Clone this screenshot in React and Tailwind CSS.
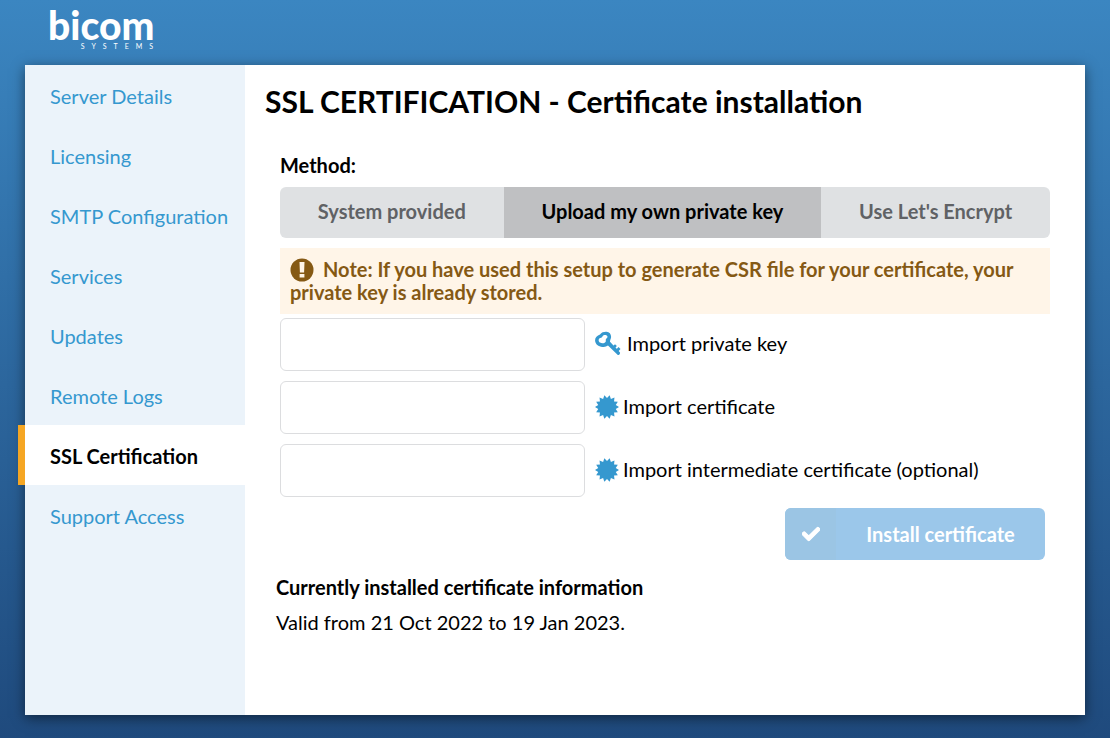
import { useState } from "react";
import { FaCheck } from "react-icons/fa";

const menuItems = [
  "Server Details",
  "Licensing",
  "SMTP Configuration",
  "Services",
  "Updates",
  "Remote Logs",
  "SSL Certification",
  "Support Access",
];

const methods = ["System provided", "Upload my own private key", "Use Let's Encrypt"];

// 14 spikes around the centre of a 24x24 box
const sealPoints = Array.from({ length: 28 }, (_, i) => {
  const radius = i % 2 ? 12 : 9;
  const angle = (Math.PI * i) / 14;
  return `${(12 + radius * Math.sin(angle)).toFixed(2)},${(12 - radius * Math.cos(angle)).toFixed(2)}`;
}).join(" ");

const KeyIcon = () => (
  <svg viewBox="0 0 28 26" className="h-[26px] w-7 shrink-0 text-[#3598cf]" fill="currentColor" aria-hidden="true">
    <path
      fillRule="evenodd"
      d="M5 3.500C6.500 1.200 9 .7 11.500.8c3 .2 4.700 2.600 4.600 5.200-.1 1.800-1.200 3.200-1.100 4.700L25 21.600c.3 1.400-.8 2.600-2.200 2.500l-9.800-9.500c-1.700 1.200-3.200 1.500-5.500 1.300C3.300 15.600.4 13.100.1 9.700-.1 6.700 2 4.500 5 3.500ZM7.600 5.300C7 6.900 5.400 6.700 4.300 7.600 3.200 8.600 3.600 10.700 5 11.600c1.700 1.100 4.400.9 5.500-.5.700-1-.1-2.100.5-3.200.6-.9 1.500-1 1.500-2.200C12.300 3.600 8.500 3.300 7.600 5.300Z"
    />
    <path d="M17.500 15.500 20 13.200l1.900 1.900-1.500 1.500 1.300 1.400 1.800-1.900 2 2-3.300 3.300Z" />
  </svg>
);

const SealIcon = () => (
  <svg viewBox="0 0 24 24" className="h-6 w-6 shrink-0 text-[#3598cf]" fill="currentColor" aria-hidden="true">
    <polygon points={sealPoints} />
  </svg>
);

const AlertIcon = () => (
  <svg viewBox="0 0 24 24" className="-my-1 mr-[9px] inline-block h-6 w-6 align-[-1px]" aria-hidden="true">
    <circle cx="12" cy="12" r="11.500" fill="#855914" />
    <path d="M9.500 4h5l-.4 10.500H9.900ZM9.600 16h4.800v3.500H9.600Z" fill="#fff5e8" />
  </svg>
);

const fields = [
  { id: "privateKey", label: "Import private key", icon: KeyIcon },
  { id: "certificate", label: "Import certificate", icon: SealIcon },
  { id: "intermediate", label: "Import intermediate certificate (optional)", icon: SealIcon },
];

const App = () => {
  const [active, setActive] = useState("SSL Certification");
  const [method, setMethod] = useState(methods[1]);
  const [values, setValues] = useState({ privateKey: "", certificate: "", intermediate: "" });

  const handleChange = (e) => {
    const { name, value } = e.target;
    setValues((prev) => ({ ...prev, [name]: value }));
  };

  return (
    <div className="flex min-h-screen flex-col bg-linear-to-b from-[#3b86c1] to-[#1f4a7d] px-[25px] pb-[23px] font-['Lato',sans-serif] text-xl text-black">
      <header className="h-[65px] pt-[7px] pl-[23px] text-white">
        <a href="#home" className="flex w-28 flex-col">
          <span className="text-[39px] leading-9 font-black">bicom</span>
          <span className="self-end text-[7px] leading-[6px] tracking-[7px]">SYSTEMS</span>
        </a>
      </header>

      <div className="flex flex-1 bg-white shadow-[0_3px_12px_rgba(0,0,0,0.5)]">
        <nav className="w-[220px] shrink-0 bg-[#ebf3fa]">
          {menuItems.map((item) => (
            <a
              key={item}
              href="#menu"
              onClick={() => setActive(item)}
              className={
                item === active
                  ? "-ml-[7px] flex h-15 items-center border-l-[7px] border-[#f5a623] bg-white pt-0.5 pl-[25px] font-bold"
                  : "flex h-15 items-center pt-0.5 pl-[25px] text-[#3598cf]"
              }
            >
              {item}
            </a>
          ))}
        </nav>

        <main className="min-w-0 flex-1 px-5 pt-[18px]">
          <h1 className="text-3xl leading-9 font-bold">SSL CERTIFICATION - Certificate installation</h1>

          <form className="px-[15px] pt-8" onSubmit={(e) => e.preventDefault()}>
            <p className="pb-2 leading-7 font-bold">Method:</p>
            <div className="flex h-[51px] overflow-hidden rounded-md bg-[#dfe1e3]">
              {methods.map((name) => (
                <button
                  key={name}
                  type="button"
                  onClick={() => setMethod(name)}
                  className={
                    name === method
                      ? "flex-auto bg-[#bfc0c2] pb-1 font-bold whitespace-nowrap"
                      : "flex-auto pb-1 font-bold whitespace-nowrap text-[#606265]"
                  }
                >
                  {name}
                </button>
              ))}
            </div>

            <p className="mt-[10px] bg-[#fff5e8] p-[10px] leading-[23px] font-bold text-[#855914]">
              <AlertIcon />
              Note: If you have used this setup to generate CSR file for your certificate, your private key is
              already stored.
            </p>

            <div className="mt-1 flex flex-col gap-[10px]">
              {fields.map(({ id, label, icon: Icon }) => (
                <div key={id} className="flex items-center gap-[10px]">
                  <input
                    id={id}
                    name={id}
                    type="text"
                    value={values[id]}
                    onChange={handleChange}
                    className="h-[53px] w-[305px] rounded-md border border-[#dcdddf] bg-white px-3 outline-none focus:border-[#3598cf]"
                  />
                  <label htmlFor={id} className="flex items-center gap-1 pb-0.5">
                    <Icon />
                    <span className="pb-0.5">{label}</span>
                  </label>
                </div>
              ))}
            </div>

            <div className="flex justify-end pt-[11px] pr-[5px]">
              <button
                type="submit"
                className="flex h-[52px] w-[260px] overflow-hidden rounded-md bg-[#9bc7ea] font-bold text-white"
              >
                <span className="flex h-full w-[51px] items-center justify-center bg-[#9bc5e4]">
                  <FaCheck size={18} strokeWidth={30} />
                </span>
                <span className="flex h-full flex-1 items-center justify-center">Install certificate</span>
              </button>
            </div>
          </form>

          <section className="px-[11px] pt-[10px]">
            <h2 className="leading-[35px] font-bold">Currently installed certificate information</h2>
            <p className="leading-[35px]">Valid from 21 Oct 2022 to 19 Jan 2023.</p>
          </section>
        </main>
      </div>
    </div>
  );
};

export default App;
